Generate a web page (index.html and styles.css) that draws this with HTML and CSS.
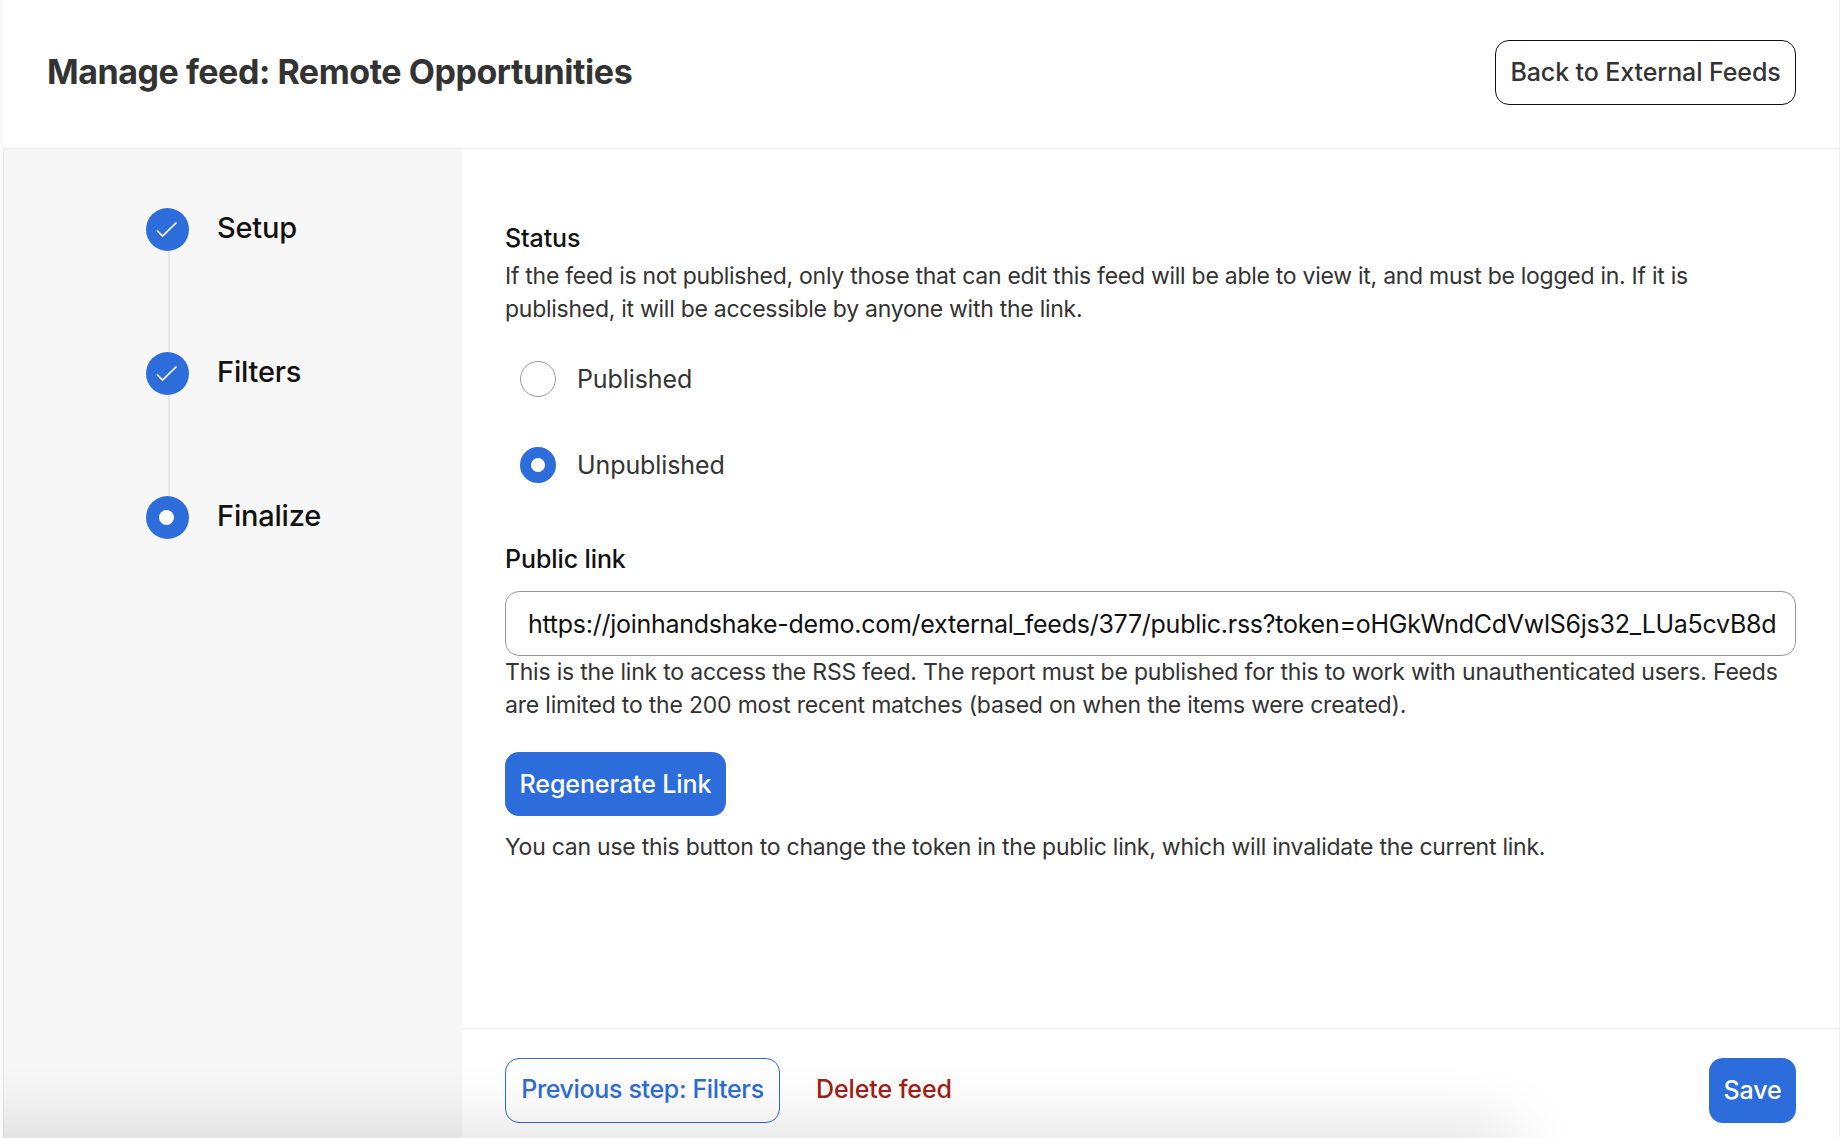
FILE: index.html
```html
<!DOCTYPE html>
<html lang="en">
<head>
<meta charset="utf-8">
<title>Manage feed: Remote Opportunities</title>
<link rel="stylesheet" href="styles.css">
</head>
<body>
<div class="frame">
  <header class="top">
    <h1 class="title">Manage feed: Remote Opportunities</h1>
    <a class="btn btn-outline-dark">Back to External Feeds</a>
  </header>
  <div class="body">
    <aside class="side">
      <ol class="steps">
        <li class="step step-line">
          <span class="dot"><svg class="check" width="24" height="18" viewBox="0 0 24 18" fill="none"><path d="M1 9.5 L6.5 15 L20.5 1.5" stroke="#fff" stroke-width="1.7"/></svg></span>
          <span class="step-name">Setup</span>
        </li>
        <li class="step step-line">
          <span class="dot"><svg class="check" width="24" height="18" viewBox="0 0 24 18" fill="none"><path d="M1 9.5 L6.5 15 L20.5 1.5" stroke="#fff" stroke-width="1.7"/></svg></span>
          <span class="step-name">Filters</span>
        </li>
        <li class="step">
          <span class="dot"><span class="dot-inner"></span></span>
          <span class="step-name">Finalize</span>
        </li>
      </ol>
    </aside>
    <main class="main">
      <div class="content">
        <div class="label">Status</div>
        <p class="text text-status">If the feed is not published, only those that can edit this feed will be able to view it, and must be logged in. If it is published, it will be accessible by anyone with the link.</p>
        <div class="radios">
          <label class="radio"><span class="radio-mark"></span><span>Published</span></label>
          <label class="radio"><span class="radio-mark radio-on"></span><span>Unpublished</span></label>
        </div>
        <div class="label label-link">Public link</div>
        <input class="url" type="text" readonly value="https://joinhandshake-demo.com/external_feeds/377/public.rss?token=oHGkWndCdVwlS6js32_LUa5cvB8dKx">
        <p class="text text-note">This is the link to access the RSS feed. The report must be published for this to work with unauthenticated users. Feeds are limited to the 200 most recent matches (based on when the items were created).</p>
        <a class="btn btn-primary btn-regen">Regenerate Link</a>
        <p class="text text-last">You can use this button to change the token in the public link, which will invalidate the current link.</p>
      </div>
      <footer class="foot">
        <a class="btn btn-outline-blue">Previous step: Filters</a>
        <a class="delete">Delete feed</a>
        <a class="btn btn-primary btn-save">Save</a>
      </footer>
    </main>
  </div>
  <div class="fade"></div>
</div>
</body>
</html>
```

FILE: styles.css
```css
* { box-sizing: border-box; }
html, body { margin: 0; padding: 0; height: 100%; }
body {
  font-family: Inter, "Liberation Sans", sans-serif;
  color: #333;
  background: #fff;
  overflow: hidden;
}
.frame {
  position: relative;
  height: 1138px;
  display: flex;
  flex-direction: column;
  border-left: 3px solid #fafafa;
  border-right: 1px solid #f2f2f2;
  overflow: hidden;
}
.top {
  height: 149px;
  flex: none;
  display: flex;
  align-items: center;
  justify-content: space-between;
  padding: 0 43px 3px 44px;
  border-bottom: 1px solid #ebebeb;
}
.title {
  margin: 0 0 2px;
  font-size: 34px;
  line-height: 40px;
  font-weight: 700;
  letter-spacing: -0.45px;
  color: #333;
}
.btn {
  display: inline-flex;
  align-items: center;
  justify-content: center;
  height: 65px;
  padding-bottom: 2px;
  border-radius: 14px;
  font-size: 25px;
  letter-spacing: -0.1px;
  font-weight: 500;
  white-space: nowrap;
}
.btn-outline-dark {
  width: 301px;
  border: 1.5px solid #111;
  color: #333;
  background: #fff;
}
.btn-primary { background: #2d6cdb; color: #fff; }
.btn-outline-blue {
  width: 275px;
  padding-bottom: 4px;
  border: 1.5px solid #2d6cdb;
  color: #2d6cdb;
  background: #fff;
  letter-spacing: -0.35px;
}
.body { flex: 1; display: flex; min-height: 0; }
.side {
  width: 459px;
  flex: none;
  background: #f7f7f7;
  border-left: 1px solid #e8e8e8;
  padding: 59px 0 0 142px;
}
.steps { list-style: none; margin: 0; padding: 0; }
.step {
  position: relative;
  display: flex;
  align-items: flex-start;
  gap: 28px;
  height: 144px;
}
.step-line::before {
  content: "";
  position: absolute;
  left: 22px;
  top: 43px;
  width: 2px;
  height: 101px;
  background: #e6e6e6;
}
.dot {
  width: 43px;
  height: 43px;
  border-radius: 50%;
  background: #2d6cdb;
  flex: none;
  display: flex;
  align-items: center;
  justify-content: center;
}
.dot-inner { width: 15px; height: 15px; border-radius: 50%; background: #fff; margin-right: 2px; }
.step-name {
  font-size: 29px;
  letter-spacing: -0.2px;
  line-height: 40px;
  font-weight: 500;
  color: #111;
}
.main { flex: 1; display: flex; flex-direction: column; min-width: 0; }
.content { flex: 1; padding: 72px 43px 0 43px; }
.label {
  font-size: 25px;
  letter-spacing: -0.1px;
  line-height: 34px;
  font-weight: 500;
  color: #111;
}
.text {
  margin: 0;
  font-size: 23px;
  letter-spacing: -0.25px;
  line-height: 33px;
  color: #333;
}
.text-status { margin-top: 5px; letter-spacing: -0.27px; }
.text-note { letter-spacing: -0.2px; }
.radios { display: flex; flex-direction: column; gap: 50px; margin: 35px 0 0 15px; }
.radio {
  display: flex;
  align-items: center;
  gap: 21px;
  height: 36px;
  font-size: 25px;
  letter-spacing: -0.1px;
  color: #333;
}
.radio-mark {
  width: 36px;
  height: 36px;
  border-radius: 50%;
  border: 1px solid #999;
  background: #fff;
}
.radio-on { border: 11px solid #2d6cdb; }
.label-link { margin-top: 59px; }
.url {
  display: block;
  width: 100%;
  height: 65px;
  margin-top: 15px;
  padding: 0 20px 0 22px;
  border: 1px solid #999;
  border-radius: 14px;
  font-family: inherit;
  font-size: 25px;
  letter-spacing: -0.26px;
  color: #111;
  background: #fff;
  outline: none;
}
.btn-regen { width: 221px; height: 64px; margin-top: 30px; padding-bottom: 0; }
.text-last { margin-top: 15px; }
.foot {
  height: 110px;
  flex: none;
  display: flex;
  align-items: flex-start;
  padding: 29px 43px 0 43px;
  border-top: 1px solid #ebebeb;
}
.delete {
  margin-left: 36px;
  line-height: 62px;
  font-size: 25px;
  letter-spacing: -0.1px;
  font-weight: 500;
  color: #a51c16;
}
.btn-save { width: 87px; margin-left: auto; }
.fade {
  position: absolute;
  left: -100px;
  width: 1610px;
  bottom: -40px;
  height: 40px;
  pointer-events: none;
  box-shadow: 0 0 75px 0 rgba(0, 0, 0, 0.2);
}
```
